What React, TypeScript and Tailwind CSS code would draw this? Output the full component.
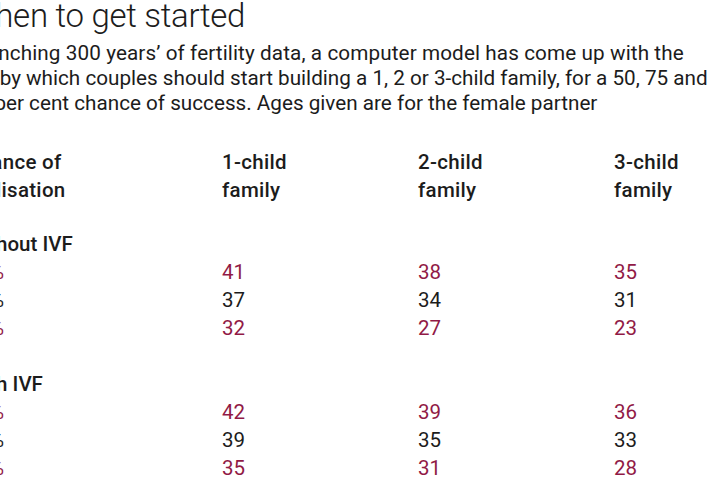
import React from 'react';

const RED = 'text-[#911a46]';

type Row = { chance: string; ages: number[]; red: boolean };

const withoutIvf: Row[] = [
  { chance: '50%', ages: [41, 38, 35], red: true },
  { chance: '75%', ages: [37, 34, 31], red: false },
  { chance: '90%', ages: [32, 27, 23], red: true },
];

const withIvf: Row[] = [
  { chance: '50%', ages: [42, 39, 36], red: true },
  { chance: '75%', ages: [39, 35, 33], red: false },
  { chance: '90%', ages: [35, 31, 28], red: true },
];

const Section = ({ title, rows }: { title: string; rows: Row[] }) => (
  <div>
    <div className="h-[28px] leading-[28px] font-medium">{title}</div>
    {rows.map((r) => (
      <div
        key={r.chance}
        className={`grid grid-cols-[256px_196px_196px_196px] h-[28px] leading-[28px] ${r.red ? RED : 'text-[#1c1c1c]'}`}
      >
        <span>{r.chance}</span>
        {r.ages.map((a, i) => (
          <span key={i}>{a}</span>
        ))}
      </div>
    ))}
  </div>
);

export default function App() {
  return (
    <div
      className="w-[715px] h-[477px] overflow-hidden bg-white text-[#1c1c1c]"
      style={{ fontFamily: 'Roboto, "Open Sans", sans-serif' }}
    >
      <div className="ml-[-34px] w-[900px]">
        <h1 className="text-[33px] leading-[36px] font-light mt-[-2px] tracking-[-0.3px]">
          When to get started
        </h1>
        <div className="text-[20.7px] leading-[25px] mt-[7px] whitespace-nowrap">
          <div className="tracking-[0.1px]">
            Crunching 300 years’ of fertility data, a computer model has come up with the
          </div>
          <div className="ml-[-16px]">
            ages by which couples should start building a 1, 2 or 3-child family, for a 50, 75 and
          </div>
          <div>90 per cent chance of success. Ages given are for the female partner</div>
        </div>
        <div className="text-[20.5px] mt-[32px]">
          <div className="grid grid-cols-[256px_196px_196px_196px] font-medium leading-[28px] tracking-[0.3px]">
            <span>
              Chance of
              <br />
              realisation
            </span>
            <span>
              1-child
              <br />
              family
            </span>
            <span>
              2-child
              <br />
              family
            </span>
            <span>
              3-child
              <br />
              family
            </span>
          </div>
          <div className="mt-[26px]">
            <Section title="Without IVF" rows={withoutIvf} />
          </div>
          <div className="mt-[28px]">
            <Section title="With IVF" rows={withIvf} />
          </div>
        </div>
      </div>
    </div>
  );
}
